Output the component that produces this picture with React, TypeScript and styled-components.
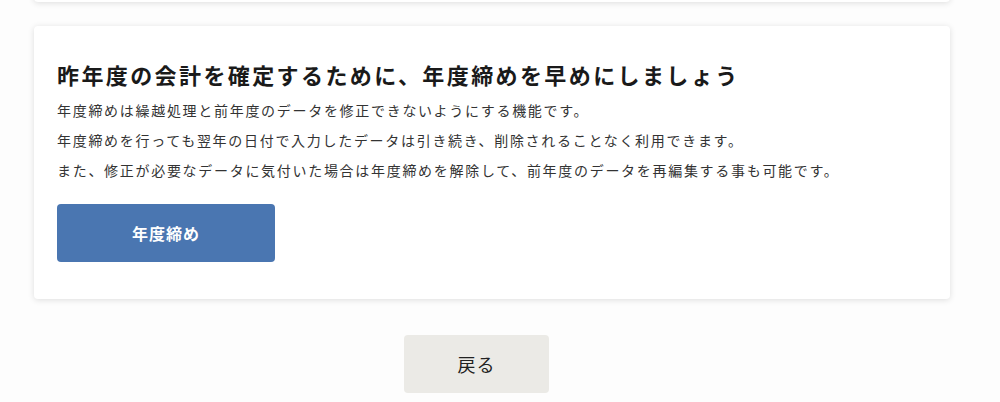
import styled, {createGlobalStyle} from "styled-components";

const GlobalStyle = createGlobalStyle`
body {
  margin: 0;
  background: #fdfdfd;
  font-family: "Noto Sans CJK JP", "Noto Sans", sans-serif;
  color: #222;
}
`

const Page = styled.div`
display: flex;
flex-direction: column;
margin-top: -100px;
`

const Card = styled.section<{$height?: number}>`
margin: 0 50px 0 34px;
background: #fff;
border-radius: 4px;
box-shadow: 0 1px 6px rgba(0,0,0,0.13);
padding: 32px 23px 37px;
${p => p.$height ? `height: ${p.$height}px; box-sizing: border-box;` : ""}
& + & {
  margin-top: 24px;
}
`

const Title = styled.h2`
margin: 0;
font-size: 22px;
line-height: 32px;
font-weight: 700;
color: #1a1a1a;
letter-spacing: 2.4px;
`

const Text = styled.p`
margin: 0;
font-size: 14px;
line-height: 30px;
color: #333;
letter-spacing: 1.7px;
`

const Body = styled.div`
margin-top: 5px;
`

const PrimaryButton = styled.button`
margin-top: 19px;
width: 218px;
height: 58px;
border: none;
border-radius: 4px;
background: #4a76b1;
color: #fff;
font-family: inherit;
font-size: 16px;
font-weight: 700;
letter-spacing: 1px;
cursor: pointer;
`

const Footer = styled.div`
display: flex;
justify-content: center;
padding: 36px 47px 10px 0;
`

const BackButton = styled.button`
width: 145px;
height: 58px;
border: none;
border-radius: 4px;
background: #ebeae6;
color: #222;
font-family: inherit;
font-size: 18px;
letter-spacing: 1px;
cursor: pointer;
`

const App = () => {
  return (
    <Page>
      <GlobalStyle />
      <Card $height={102} />
      <Card>
        <Title>昨年度の会計を確定するために、年度締めを早めにしましょう</Title>
        <Body>
          <Text>年度締めは繰越処理と前年度のデータを修正できないようにする機能です。</Text>
          <Text>年度締めを行っても翌年の日付で入力したデータは引き続き、削除されることなく利用できます。</Text>
          <Text>また、修正が必要なデータに気付いた場合は年度締めを解除して、前年度のデータを再編集する事も可能です。</Text>
        </Body>
        <PrimaryButton>年度締め</PrimaryButton>
      </Card>
      <Footer>
        <BackButton>戻る</BackButton>
      </Footer>
    </Page>
  );
};

export default App
